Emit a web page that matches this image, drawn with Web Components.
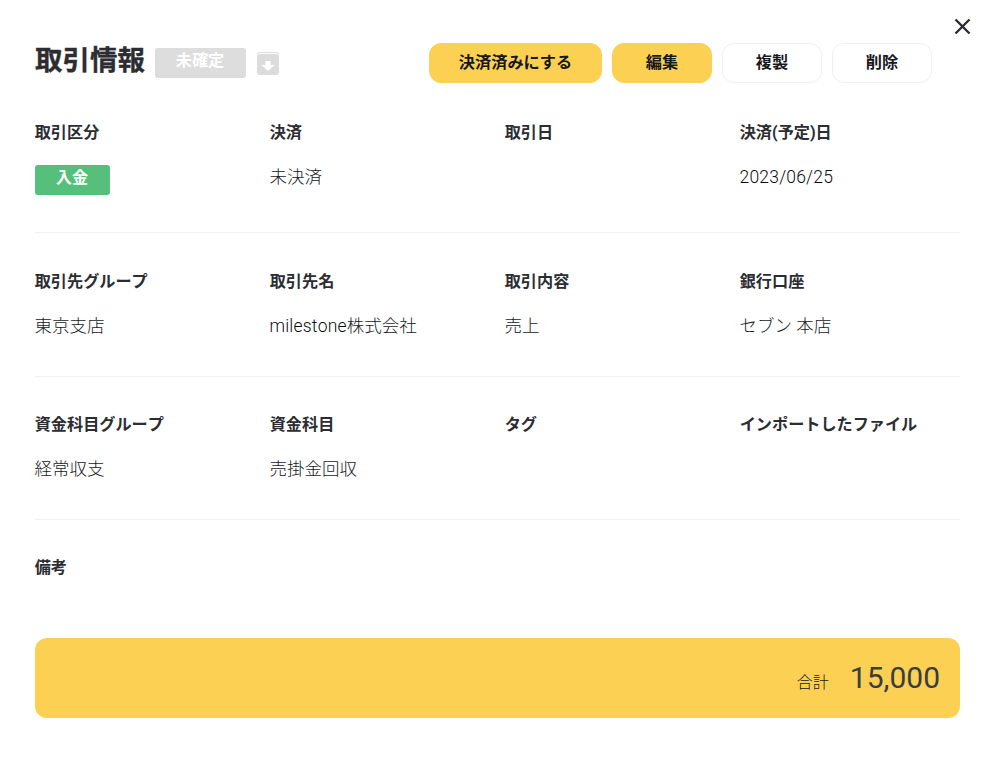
<!DOCTYPE html>
<html lang="ja"><head><meta charset="utf-8"><style>
html,body{margin:0;background:#fff}
body{font-family:Roboto,"Noto Sans CJK JP",sans-serif;color:#2b2d33;font-kerning:none}
.lat{font-weight:300;letter-spacing:.2px;color:#0c0c10}
</style></head><body>
<template id="t-modal"><style>
:host{display:block;width:987px;height:759px;box-sizing:border-box;padding:43px 27px 0 35px;position:relative;overflow:hidden}
.close{position:absolute;left:954px;top:18px;width:17px;height:17px}
.head{display:flex;align-items:center;height:40px;padding-bottom:0}
.title{font-size:27.5px;font-weight:700;line-height:40px;margin-right:10px;position:relative;top:-2px;-webkit-text-stroke:.35px currentColor}
.actions{margin-left:auto;margin-right:28px;display:flex;gap:10px}
.body{margin-top:38px}
.total{margin-top:14px}
</style>
<svg class="close" viewBox="0 0 17 17"><path d="M1.5 1.5L15.5 15.5M15.5 1.5L1.5 15.5" stroke="#2b2d33" stroke-width="2.4" fill="none"/></svg>
<div class="head"><span class="title"><slot name="title"></slot></span><slot name="status"></slot><span class="actions"><slot name="actions"></slot></span></div>
<div class="body"><slot></slot></div>
<div class="total"><slot name="total"></slot></div>
</template>
<template id="t-badge"><style>
:host{display:inline-flex;align-items:center;justify-content:center;height:30px;border-radius:3px;font-size:16.2px;font-weight:700;color:#fff;background:var(--bg,#ddd);width:var(--w,91px);line-height:1}
span{position:relative;top:-2px;left:-.5px}
</style><span><slot></slot></span></template>
<template id="t-archive"><style>
:host{display:inline-block;width:22px;height:23px;margin:0 0 0 11px;position:relative;top:.5px}
svg{display:block}
</style><svg width="22" height="23" viewBox="0 0 22 23"><rect width="22" height="23" rx="3" fill="#dcdcdc"/><path d="M1 3.5Q1 1.5 3 1.5H19Q21 1.5 21 3.5" fill="none" stroke="#fff" stroke-width="1"/><path d="M8.5 9H13.5V13H17.5L11 19L4.5 13H8.5Z" fill="#fff"/></svg></template>
<template id="t-btn"><style>
:host{display:inline-flex;align-items:center;justify-content:center;box-sizing:border-box;height:40px;width:100px;border-radius:12px;font-size:16.2px;font-weight:700;color:#17181c;background:#fff;border:1px solid #eeeff1;line-height:1}
:host([primary]){background:#fbd053;border-color:#fbd053}
:host([wide]){width:173px}
</style><slot></slot></template>
<template id="t-row"><style>
:host{display:grid;grid-template-columns:repeat(4,235px);height:var(--h,143px);box-sizing:border-box;width:925px;border-bottom:1px solid #eeeff1}
:host([plain]){border-bottom:0;height:auto}
</style><slot></slot></template>
<template id="t-field"><style>
:host{display:block}
.l{font-size:16.15px;font-weight:700;line-height:24px;height:24px;color:#2b2d33;margin-left:-.3px}
.v{margin-top:20px;font-size:17.5px;font-weight:300;line-height:24px;min-height:24px;color:#17181c;margin-left:-.5px}
</style><div class="l"><slot name="label"></slot></div><div class="v"><slot></slot></div></template>
<template id="t-total"><style>
:host{display:flex;align-items:center;justify-content:flex-end;box-sizing:border-box;height:80px;width:925px;border-radius:12px;background:#fbd053;padding-right:20px}
.a{font-size:16px;font-weight:300;color:#17181c;margin-right:21px;position:relative;top:3px}
.n{font-size:30px;line-height:1;font-weight:400;color:#3a3c42}
</style><span class="a"><slot name="label"></slot></span><span class="n"><slot></slot></span></template>
<x-modal>
<span slot="title">取引情報</span>
<x-badge slot="status">未確定</x-badge>
<x-archive slot="status"></x-archive>
<x-btn slot="actions" primary wide>決済済みにする</x-btn>
<x-btn slot="actions" primary>編集</x-btn>
<x-btn slot="actions">複製</x-btn>
<x-btn slot="actions">削除</x-btn>
<x-row style="--h:112px">
<x-field><span slot="label">取引区分</span><x-badge style="--bg:#55bf7b;--w:75px;margin:0 0 0 .5px">入金</x-badge></x-field>
<x-field><span slot="label">決済</span>未決済</x-field>
<x-field><span slot="label">取引日</span></x-field>
<x-field><span slot="label">決済(予定)日</span><span class="lat">2023/06/25</span></x-field>
</x-row>
<x-row style="--h:144px;padding-top:37px">
<x-field><span slot="label">取引先グループ</span>東京支店</x-field>
<x-field><span slot="label">取引先名</span><span class="lat">milestone</span>株式会社</x-field>
<x-field><span slot="label">取引内容</span>売上</x-field>
<x-field><span slot="label">銀行口座</span>セブン 本店</x-field>
</x-row>
<x-row style="--h:143px;padding-top:36px">
<x-field><span slot="label">資金科目グループ</span>経常収支</x-field>
<x-field><span slot="label">資金科目</span>売掛金回収</x-field>
<x-field><span slot="label">タグ</span></x-field>
<x-field><span slot="label">インポートしたファイル</span></x-field>
</x-row>
<x-row plain style="padding-top:36px">
<x-field><span slot="label">備考</span></x-field>
</x-row>
<x-total slot="total"><span slot="label">合計</span>15,000</x-total>
</x-modal>
<script>
function def(name,id){customElements.define(name,class extends HTMLElement{constructor(){super();this.attachShadow({mode:'open'}).appendChild(document.getElementById(id).content.cloneNode(true));}});}
[['x-modal','t-modal'],['x-badge','t-badge'],['x-archive','t-archive'],['x-btn','t-btn'],['x-row','t-row'],['x-field','t-field'],['x-total','t-total']].forEach(a=>def(a[0],a[1]));
</script>
</body></html>
